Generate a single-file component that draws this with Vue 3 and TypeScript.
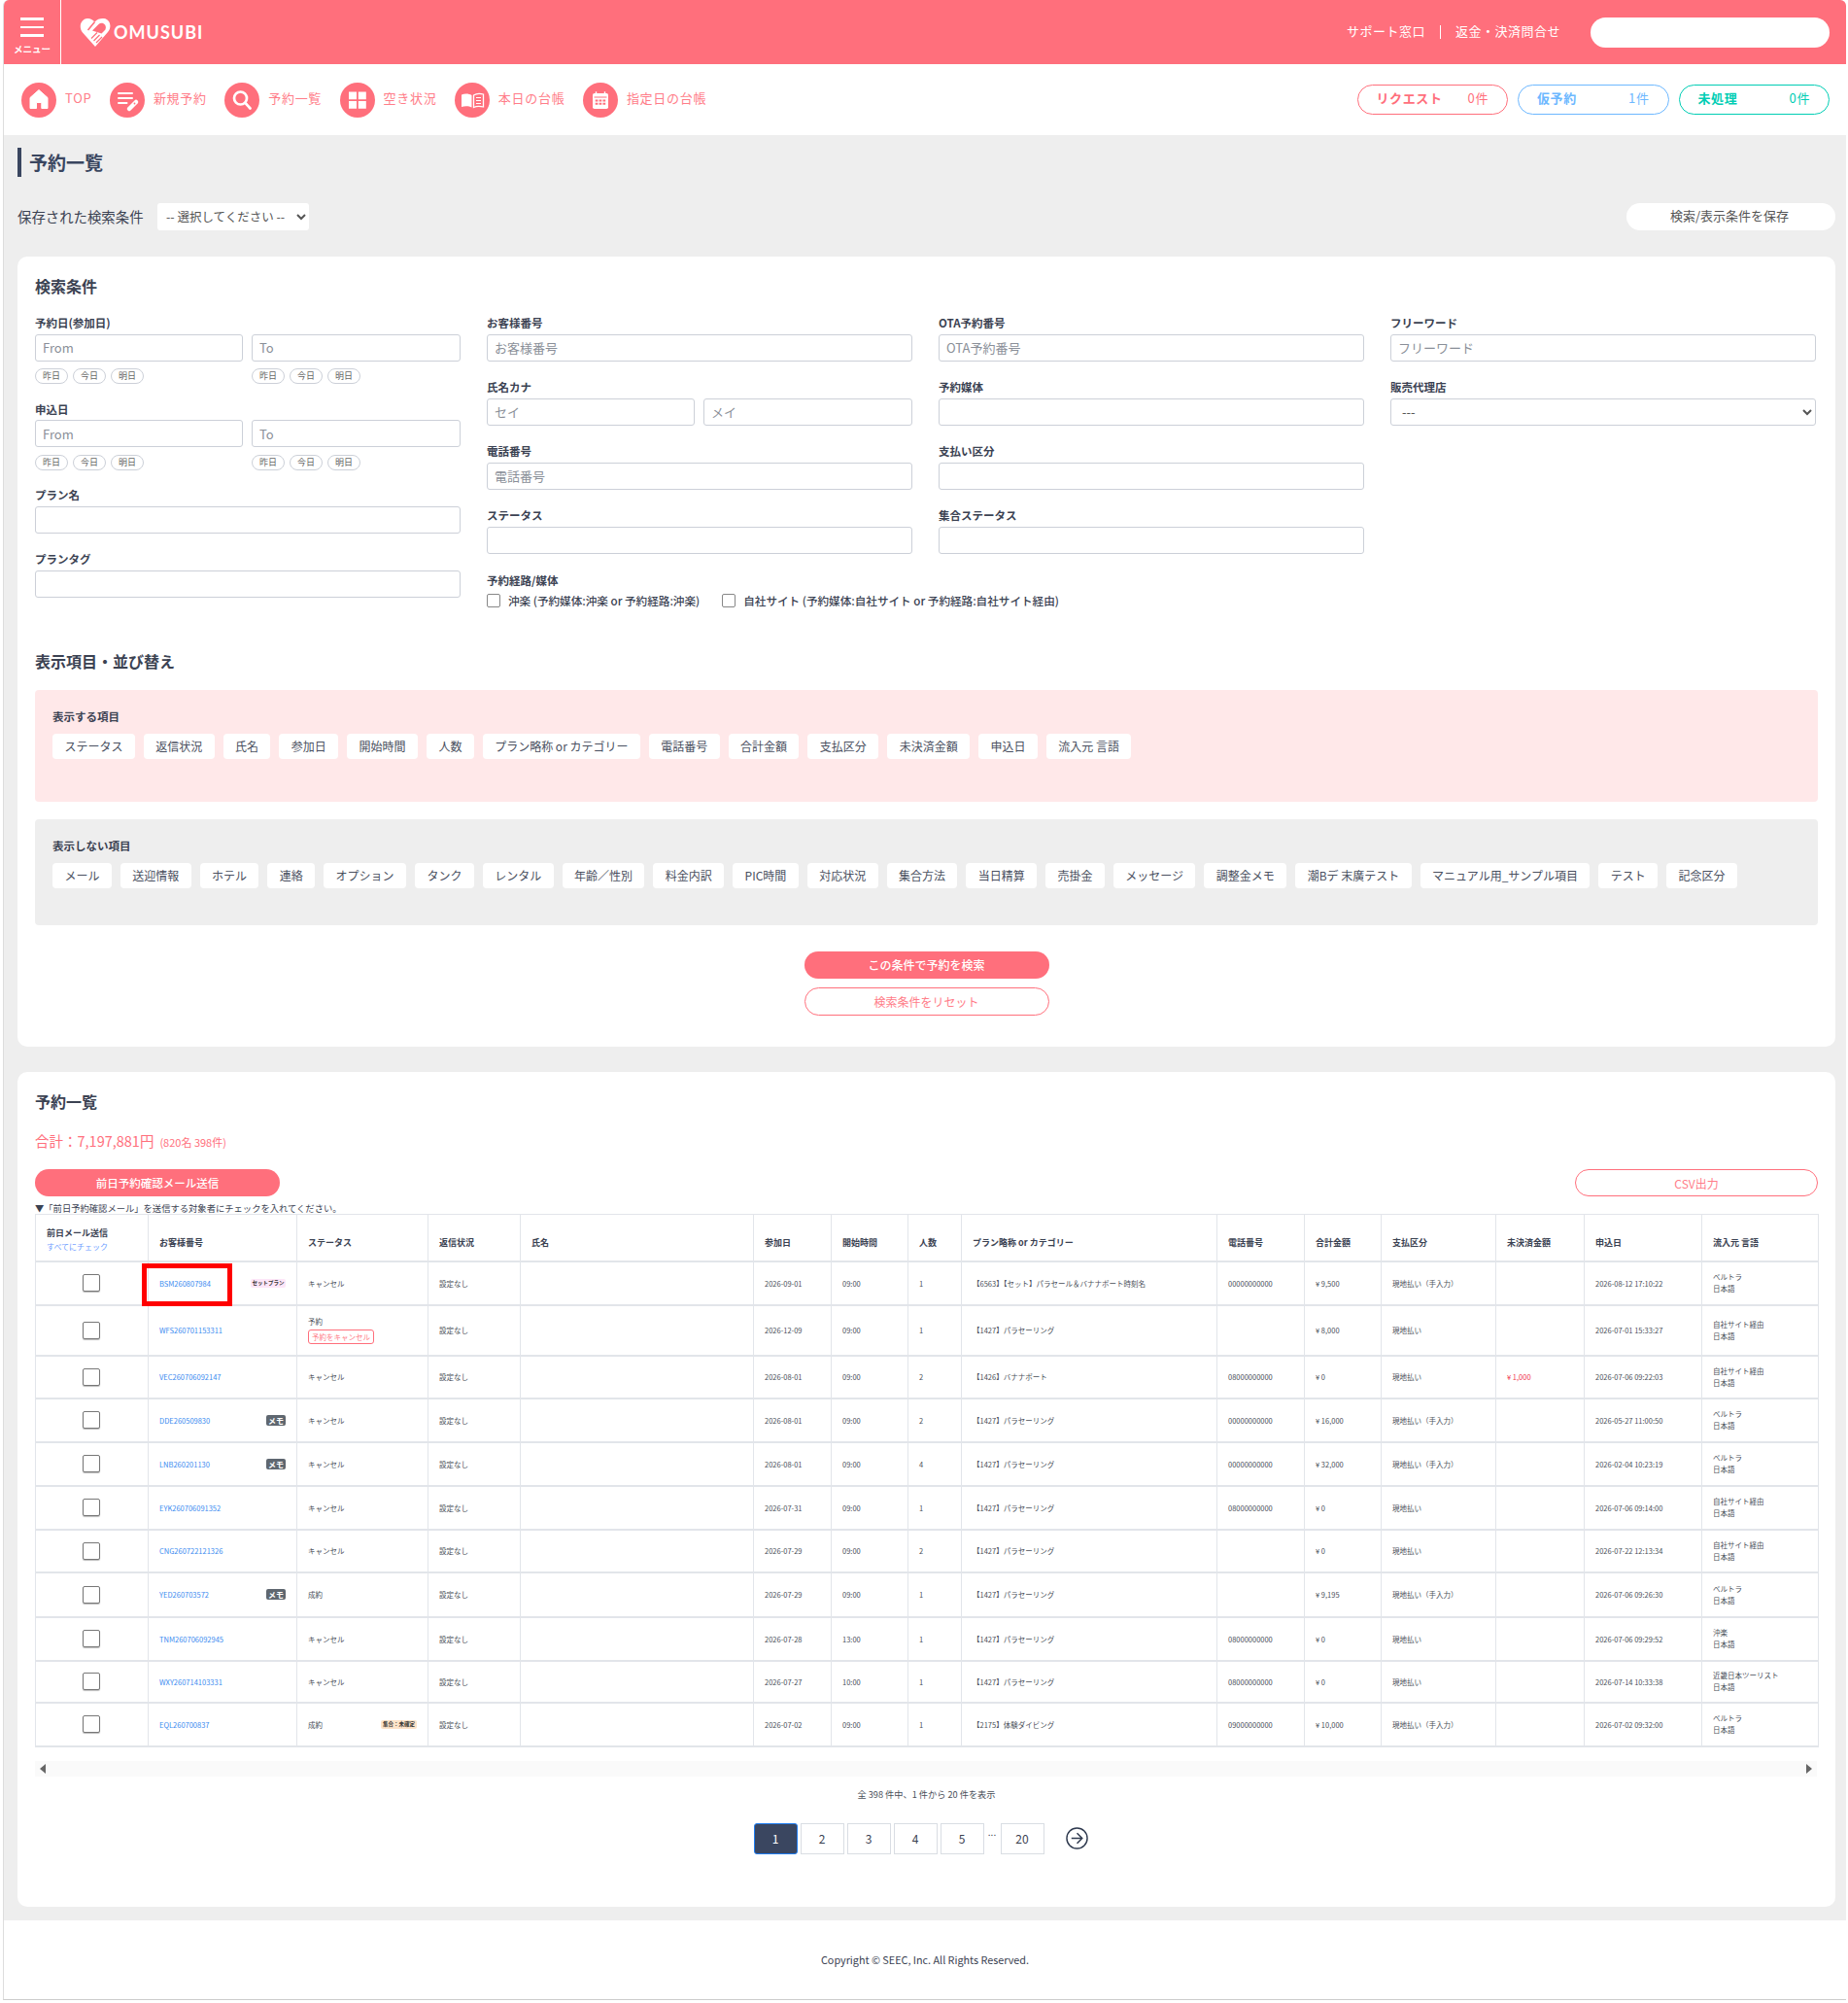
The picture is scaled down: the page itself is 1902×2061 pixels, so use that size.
<script setup lang="ts">
interface Row {
  id: string
  status: string
  date: string
  time: string
  n: number
  plan: string
  tel: string
  total: string
  pay: string
  unpaid: string
  applied: string
  source: string
  h: number
  badge?: 'set' | 'memo'
  gather?: boolean
  cancelBtn?: boolean
  flag?: boolean
}

const TEL0 = '00000000000'
const TEL8 = '08000000000'
const PARA = '【1427】パラセーリング'
const HAND = '現地払い（手入力）'
const GEN = '現地払い'
const CAN = 'キャンセル'
const VEL = 'ベルトラ'
const OWN = '自社サイト経由'

const rows: Row[] = [
  { id: 'BSM260807984', status: CAN, date: '2026-09-01', time: '09:00', n: 1, plan: '【6563】【セット】パラセール＆バナナボート時刻名', tel: TEL0, total: '¥ 9,500', pay: HAND, unpaid: '', applied: '2026-08-12 17:10:22', source: VEL, h: 45, badge: 'set', flag: true },
  { id: 'WFS260701153311', status: '予約', date: '2026-12-09', time: '09:00', n: 1, plan: PARA, tel: '', total: '¥ 8,000', pay: GEN, unpaid: '', applied: '2026-07-01 15:33:27', source: OWN, h: 52, cancelBtn: true },
  { id: 'VEC260706092147', status: CAN, date: '2026-08-01', time: '09:00', n: 2, plan: '【1426】バナナボート', tel: TEL8, total: '¥ 0', pay: GEN, unpaid: '¥ 1,000', applied: '2026-07-06 09:22:03', source: OWN, h: 44 },
  { id: 'DDE260509830', status: CAN, date: '2026-08-01', time: '09:00', n: 2, plan: PARA, tel: TEL0, total: '¥ 16,000', pay: HAND, unpaid: '', applied: '2026-05-27 11:00:50', source: VEL, h: 45, badge: 'memo' },
  { id: 'LNB260201130', status: CAN, date: '2026-08-01', time: '09:00', n: 4, plan: PARA, tel: TEL0, total: '¥ 32,000', pay: HAND, unpaid: '', applied: '2026-02-04 10:23:19', source: VEL, h: 45, badge: 'memo' },
  { id: 'EYK260706091352', status: CAN, date: '2026-07-31', time: '09:00', n: 1, plan: PARA, tel: TEL8, total: '¥ 0', pay: GEN, unpaid: '', applied: '2026-07-06 09:14:00', source: OWN, h: 45 },
  { id: 'CNG260722121326', status: CAN, date: '2026-07-29', time: '09:00', n: 2, plan: PARA, tel: '', total: '¥ 0', pay: GEN, unpaid: '', applied: '2026-07-22 12:13:34', source: OWN, h: 44 },
  { id: 'YED260703572', status: '成約', date: '2026-07-29', time: '09:00', n: 1, plan: PARA, tel: '', total: '¥ 9,195', pay: HAND, unpaid: '', applied: '2026-07-06 09:26:30', source: VEL, h: 46, badge: 'memo' },
  { id: 'TNM260706092945', status: CAN, date: '2026-07-28', time: '13:00', n: 1, plan: PARA, tel: TEL8, total: '¥ 0', pay: GEN, unpaid: '', applied: '2026-07-06 09:29:52', source: '沖楽', h: 45 },
  { id: 'WXY260714103331', status: CAN, date: '2026-07-27', time: '10:00', n: 1, plan: PARA, tel: TEL8, total: '¥ 0', pay: GEN, unpaid: '', applied: '2026-07-14 10:33:38', source: '近畿日本ツーリスト', h: 43 },
  { id: 'EQL260700837', status: '成約', date: '2026-07-02', time: '09:00', n: 1, plan: '【2175】体験ダイビング', tel: '09000000000', total: '¥ 10,000', pay: HAND, unpaid: '', applied: '2026-07-02 09:32:00', source: VEL, h: 45, gather: true },
]

const shown = ['ステータス','返信状況','氏名','参加日','開始時間','人数','プラン略称 or カテゴリー','電話番号','合計金額','支払区分','未決済金額','申込日','流入元 言語']
const hidden = ['メール','送迎情報','ホテル','連絡','オプション','タンク','レンタル','年齢／性別','料金内訳','PIC時間','対応状況','集合方法','当日精算','売掛金','メッセージ','調整金メモ','潮Bデ 末廣テスト','マニュアル用_サンプル項目','テスト','記念区分']
const heads = ['参加日','開始時間','人数','プラン略称 or カテゴリー','電話番号','合計金額','支払区分','未決済金額','申込日','流入元 言語']
const widths = [116,153,135,95,240,80,79,55,263,90,79,118,91,121,120]
const navItems = ['TOP','新規予約','予約一覧','空き状況','本日の台帳','指定日の台帳']
const dayChips = ['昨日','今日','明日']
const pages = ['1','2','3','4','5']
</script>

<template>
  <div class="page">
    <header class="top">
      <div class="menu">
        <span class="bars"><i></i><i></i><i></i></span>
        <span class="menu-label">メニュー</span>
      </div>
      <div class="logo">
        <svg width="32" height="30" viewBox="0 0 32 30">
          <path d="M16 30 L3 15.500 C-1.500 10 1 1.500 8 1 C11 .8 13 2 15.500 4.500 C18 1.500 22 .5 25 1 C31.500 2 33.500 10 29 15 Z" fill="#fff"/>
          <path d="M8.500 13 L15.500 4.500" stroke="#ff6f7c" stroke-width="1.600" fill="none"/>
          <path d="M13 13.500 L19.500 7 C21.500 5 24.500 5.500 26 7.500 C27.500 9.500 27 12 25.500 13.500 L22.500 16.500 Z" fill="#ff6f7c"/>
          <path d="M14.500 24 L20.500 18 M17 26 L23 20 M12 21.500 L18 15.500" stroke="#ff6f7c" stroke-width="1.200" fill="none"/>
        </svg>
        <span class="logo-text">OMUSUBI</span>
      </div>
      <div class="top-right">
        <a class="top-link">サポート窓口</a>
        <span class="sep"></span>
        <a class="top-link">返金・決済問合せ</a>
        <span class="top-search"></span>
      </div>
    </header>

    <nav class="nav">
      <div class="nav-items">
        <a v-for="(item, i) in navItems" :key="item" class="nav-item">
          <span class="nav-icon">
            <svg width="36" height="36" viewBox="0 0 36 36">
              <template v-if="i === 0">
                <path d="M18 7.500 L27 15.500 V26.500 H20.800 V20.500 H15.500 V26.500 H9 V15.500 Z" fill="#fff" stroke="#fff" stroke-width="1" stroke-linejoin="round"/>
              </template>
              <template v-else-if="i === 1">
                <path d="M9 11h14M9 16h14M9 21h8.500" stroke="#fff" stroke-width="2" stroke-linecap="round" fill="none"/>
                <path d="M20 27 L27 20" stroke="#fff" stroke-width="4.500" stroke-linecap="round"/>
                <circle cx="25.500" cy="21.500" r=".9" fill="#ff6f7c"/>
              </template>
              <template v-else-if="i === 2">
                <circle cx="16.500" cy="16" r="6.500" fill="none" stroke="#fff" stroke-width="2.700"/>
                <path d="M21.500 21 L26.500 26.500" stroke="#fff" stroke-width="2.700" stroke-linecap="round"/>
              </template>
              <template v-else-if="i === 3">
                <path d="M9 9.500h8v7.800H9zM18.800 9.500h8v7.800h-8zM9 19h8v7.800H9zM18.800 19h8v7.800h-8z" fill="#fff"/>
              </template>
              <template v-else-if="i === 4">
                <path d="M7 12.500 C10 11 14.500 11 17.500 13 V25.500 C14.500 24 10.500 24 7 25 Z" fill="#fff"/>
                <path d="M19.500 13 C22 11.300 26 11 29.500 12 V25 C26 24 22.500 24 19.500 25.500 Z" fill="none" stroke="#fff" stroke-width="1.300"/>
                <path d="M22 15.500h5M22 18.500h5M22 21.500h5" stroke="#fff" stroke-width="1.100"/>
              </template>
              <template v-else>
                <rect x="10" y="11" width="16" height="16" rx="1.800" fill="#fff"/>
                <path d="M13.500 9.300v3M22.500 9.300v3" stroke="#fff" stroke-width="1.400"/>
                <path d="M11.500 15h13" stroke="#ff6f7c" stroke-width="1"/>
                <path d="M12.700 17.500h2.700v2h-2.700zM16.600 17.500h2.700v2h-2.700zM20.500 17.500h2.700v2h-2.700zM12.700 20.800h2.700v2h-2.700zM16.600 20.800h2.700v2h-2.700zM20.500 20.800h2.700v2h-2.700z" fill="#ff6f7c"/>
              </template>
            </svg>
          </span>
          <span class="nav-label">{{ item }}</span>
        </a>
      </div>
      <div class="counts">
        <a class="count c-red"><b>リクエスト</b><span>0件</span></a>
        <a class="count c-blue"><b>仮予約</b><span>1件</span></a>
        <a class="count c-green"><b>未処理</b><span>0件</span></a>
      </div>
    </nav>

    <main class="main">
      <h1 class="page-title">予約一覧</h1>

      <div class="saved">
        <span class="saved-label">保存された検索条件</span>
        <select class="saved-select"><option>-- 選択してください --</option></select>
        <button class="save-btn">検索/表示条件を保存</button>
      </div>

      <section class="card search-card">
        <h2 class="card-title">検索条件</h2>
        <div class="form-grid">
          <div class="col">
            <div class="field f1">
              <label>予約日(参加日)</label>
              <div class="pair"><input placeholder="From" /><input placeholder="To" /></div>
              <div class="pair chips-pair">
                <div class="day-chips"><span v-for="c in dayChips" :key="c">{{ c }}</span></div>
                <div class="day-chips"><span v-for="c in dayChips" :key="c">{{ c }}</span></div>
              </div>
            </div>
            <div class="field f1">
              <label>申込日</label>
              <div class="pair"><input placeholder="From" /><input placeholder="To" /></div>
              <div class="pair chips-pair">
                <div class="day-chips"><span v-for="c in dayChips" :key="c">{{ c }}</span></div>
                <div class="day-chips"><span v-for="c in dayChips" :key="c">{{ c }}</span></div>
              </div>
            </div>
            <div class="field"><label>プラン名</label><input /></div>
            <div class="field"><label>プランタグ</label><input /></div>
          </div>
          <div class="col">
            <div class="field"><label>お客様番号</label><input placeholder="お客様番号" /></div>
            <div class="field"><label>氏名カナ</label><div class="pair"><input placeholder="セイ" /><input placeholder="メイ" /></div></div>
            <div class="field"><label>電話番号</label><input placeholder="電話番号" /></div>
            <div class="field"><label>ステータス</label><input /></div>
            <div class="field route">
              <label>予約経路/媒体</label>
              <div class="checks">
                <span class="check"><i class="box"></i>沖楽 (予約媒体:沖楽 or 予約経路:沖楽)</span>
                <span class="check"><i class="box"></i>自社サイト (予約媒体:自社サイト or 予約経路:自社サイト経由)</span>
              </div>
            </div>
          </div>
          <div class="col">
            <div class="field"><label>OTA予約番号</label><input placeholder="OTA予約番号" /></div>
            <div class="field"><label>予約媒体</label><input /></div>
            <div class="field"><label>支払い区分</label><input /></div>
            <div class="field"><label>集合ステータス</label><input /></div>
          </div>
          <div class="col">
            <div class="field"><label>フリーワード</label><input placeholder="フリーワード" /></div>
            <div class="field"><label>販売代理店</label><select class="agency"><option>---</option></select></div>
          </div>
        </div>

        <h2 class="card-title columns-title">表示項目・並び替え</h2>
        <div class="pick pick-on">
          <div class="pick-label">表示する項目</div>
          <div class="pick-chips"><span v-for="s in shown" :key="s">{{ s }}</span></div>
        </div>
        <div class="pick pick-off">
          <div class="pick-label">表示しない項目</div>
          <div class="pick-chips"><span v-for="s in hidden" :key="s">{{ s }}</span></div>
        </div>

        <div class="actions">
          <button class="btn-solid">この条件で予約を検索</button>
          <button class="btn-line">検索条件をリセット</button>
        </div>
      </section>

      <section class="card list-card">
        <h2 class="card-title">予約一覧</h2>
        <p class="sum">合計：7,197,881円<small>(820名 398件)</small></p>
        <div class="mail-row">
          <button class="btn-solid wide">前日予約確認メール送信</button>
          <button class="btn-line wide csv">CSV出力</button>
        </div>
        <p class="notice">▼「前日予約確認メール」を送信する対象者にチェックを入れてください。</p>

        <table class="table">
          <colgroup><col v-for="(w, i) in widths" :key="i" :style="{ width: w + 'px' }" /></colgroup>
          <thead>
            <tr>
              <th class="th-first">前日メール送信<a class="check-all">すべてにチェック</a></th>
              <th>お客様番号</th>
              <th>ステータス</th>
              <th>返信状況</th>
              <th>氏名</th>
              <th v-for="h in heads" :key="h">{{ h }}</th>
            </tr>
          </thead>
          <tbody>
            <tr v-for="r in rows" :key="r.id" :style="{ height: r.h + 'px' }">
              <td class="c-check"><i class="box big"></i></td>
              <td class="c-id">
                <div class="split">
                  <a>{{ r.id }}</a>
                  <span v-if="r.badge === 'set'" class="b-set">セットプラン</span>
                  <span v-if="r.badge === 'memo'" class="b-memo">メモ</span>
                </div>
                <span v-if="r.flag" class="highlight"></span>
              </td>
              <td>
                <div class="split">
                  <span>{{ r.status }}</span>
                  <span v-if="r.gather" class="b-gather">集合：未確定</span>
                </div>
                <a v-if="r.cancelBtn" class="cancel">予約をキャンセル</a>
              </td>
              <td>設定なし</td>
              <td></td>
              <td>{{ r.date }}</td>
              <td>{{ r.time }}</td>
              <td>{{ r.n }}</td>
              <td>{{ r.plan }}</td>
              <td>{{ r.tel }}</td>
              <td>{{ r.total }}</td>
              <td>{{ r.pay }}</td>
              <td class="red">{{ r.unpaid }}</td>
              <td>{{ r.applied }}</td>
              <td class="src">{{ r.source }}<br />日本語</td>
            </tr>
          </tbody>
        </table>

        <div class="scrollbar"><i class="arrow-l"></i><i class="arrow-r"></i></div>
        <p class="result">全 398 件中、1 件から 20 件を表示</p>
        <div class="pager">
          <span v-for="(p, i) in pages" :key="p" class="pg" :class="{ on: i === 0 }">{{ p }}</span>
          <span class="dots">...</span>
          <span class="pg">20</span>
          <svg class="next" width="23" height="23" viewBox="0 0 24 24"><circle cx="12" cy="12" r="11" fill="none" stroke="#2f3a4f" stroke-width="1.500"/><path d="M6 12h11M12 6.500 17.500 12 12 17.500" fill="none" stroke="#2f3a4f" stroke-width="1.500"/></svg>
        </div>
      </section>
    </main>

    <footer class="foot">Copyright © SEEC, Inc. All Rights Reserved.</footer>
  </div>
</template>

<style>
html, body { background: #fff; }
</style>

<style scoped>
.page {
  width: 1896px;
  height: 2057px;
  margin-left: 3px;
  background: #eee;
  border-left: 1px solid #ddd;
  border-bottom: 1px solid #ccc;
  border-radius: 6px 6px 0 0;
  overflow: hidden;
  font-family: "Noto Sans CJK JP", "Noto Sans", sans-serif;
  color: #3b4252;
  display: flex;
  flex-direction: column;
  box-sizing: content-box;
}
.top {
  height: 66px;
  background: #ff6f7c;
  color: #fff;
  display: flex;
  align-items: center;
  flex: none;
}
.menu {
  width: 58px;
  height: 48px;
  border-right: 1px solid #fff;
  display: flex;
  flex-direction: column;
  align-items: center;
  padding-top: 18px;
  box-sizing: content-box;
}
.bars { display: flex; flex-direction: column; gap: 6px; }
.bars i { display: block; width: 24px; height: 2.500px; background: #fff; }
.menu-label { font-size: 9.500px; font-weight: 700; line-height: 12px; margin-top: 6px; white-space: nowrap; }
.logo { display: flex; align-items: center; margin-left: 19px; gap: 3px; }
.logo-text { font-family: "Lato", sans-serif; font-weight: 700; font-size: 18px; letter-spacing: 1px; margin-bottom: 1px; }
.top-right { margin-left: auto; display: flex; align-items: center; padding-right: 17px; }
.top-link { font-size: 13px; letter-spacing: .5px; margin-bottom: 4px; }
.sep { width: 1px; height: 14px; background: #fff; margin: 0 15px; }
.top-search { width: 246px; height: 31px; background: #fff; border-radius: 16px; margin-left: 31px; }

.nav {
  height: 73px;
  background: #fff;
  display: flex;
  align-items: center;
  justify-content: space-between;
  padding: 0 17px 0 18px;
  flex: none;
}
.nav-items { display: flex; align-items: center; }
.nav-item { display: flex; align-items: center; margin-right: 18.500px; }
.nav-icon {
  width: 36px;
  height: 36px;
  border-radius: 50%;
  background: #ff6f7c;
  display: block;
  margin-right: 9px;
  flex: none;
}
.nav-icon svg { display: block; }
.nav-label { font-size: 13px; color: #ff7d89; letter-spacing: .7px; white-space: nowrap; margin-bottom: 5px; }
.counts { display: flex; gap: 10px; }
.count {
  width: 155.500px;
  height: 31px;
  box-sizing: border-box;
  border: 1px solid currentColor;
  border-radius: 16px;
  display: flex;
  align-items: center;
  justify-content: space-between;
  padding: 0 19px;
  font-size: 13px;
  letter-spacing: .6px;
}
.count b { font-weight: 700; margin-bottom: 4px; }
.count span { margin-bottom: 4px; }
.c-red { color: #ff6f7c; }
.c-blue { color: #6db8ff; }
.c-green { color: #00cdb4; }

.main { flex: 1; padding: 13px 11px 14px 14px; display: flex; flex-direction: column; }
.page-title {
  margin: 0;
  height: 30px;
  line-height: 30px;
  border-left: 4px solid #3a4660;
  padding-left: 8px;
  font-size: 19px;
  font-weight: 700;
  color: #3a4660;
}
.saved { display: flex; align-items: center; margin-top: 27px; height: 28px; }
.saved-label { font-size: 14.400px; color: #3b4252; width: 144px; margin-bottom: 2px; }
.saved-select {
  width: 156px;
  height: 28px;
  border: 0;
  border-radius: 3px;
  background: #fff;
  font: inherit;
  font-size: 12.500px;
  color: #555;
  padding: 0 5px 2px;
}
.save-btn {
  margin-left: auto;
  width: 215px;
  height: 28px;
  border: 0;
  border-radius: 14px;
  background: #fff;
  font: inherit;
  font-size: 13px;
  color: #555;
  padding: 0 3px 3px 0;
}
.card { background: #fff; border-radius: 10px; }
.search-card { margin-top: 27px; height: 813px; padding: 17px 18px 0; box-sizing: border-box; }
.card-title { margin: 0; font-size: 16px; line-height: 26px; font-weight: 700; color: #3b4252; }
.form-grid {
  display: grid;
  grid-template-columns: repeat(4, 438px);
  column-gap: 27px;
  margin-top: 17px;
  height: 342.500px;
}
.col { display: flex; flex-direction: column; }
.field { display: flex; flex-direction: column; margin-bottom: 18.500px; }
.field.f1 { margin-bottom: 17.500px; }
.field label { font-size: 11.500px; font-weight: 700; line-height: 17px; height: 17px; color: #3b4252; margin-bottom: 2.500px; }
.field input, .agency {
  width: 100%;
  height: 28px;
  box-sizing: border-box;
  border: 1px solid #ccd0d8;
  border-radius: 3px;
  background: #fff;
  padding: 0 7px;
  font: inherit;
  font-size: 13px;
  color: #555;
  outline: 0;
  display: block;
}
.field input::placeholder { color: #8a8f98; }
.pair { display: grid; grid-template-columns: 214px 215px; column-gap: 9px; }
.chips-pair { margin-top: 7.500px; }
.day-chips { display: flex; gap: 5px; }
.day-chips span {
  width: 34px;
  height: 16px;
  box-sizing: border-box;
  border: 1px solid #ccd0d8;
  border-radius: 8px;
  font-size: 9px;
  line-height: 14px;
  text-align: center;
  color: #666;
}
.route { margin-top: 1px; }
.route label { margin-bottom: 0; }
.checks { display: flex; gap: 23px; margin-top: 2px; white-space: nowrap; }
.check { display: flex; align-items: center; font-size: 11.600px; font-weight: 500; gap: 8px; color: #3b4252; height: 19px; }
.box {
  display: block;
  width: 14px;
  height: 14px;
  box-sizing: border-box;
  border: 1px solid #888;
  border-radius: 2px;
  background: #fff;
  flex: none;
}
.box.big { width: 18px; height: 18px; margin: 0 auto; border-color: #777; border-radius: 2px; box-shadow: 0 1px 1px #bbb; }
.columns-title { margin-top: 0; }
.pick { border-radius: 4px; margin-top: 17px; padding: 18px 18px 0; box-sizing: border-box; }
.pick-on { background: #ffe8e9; height: 115px; }
.pick-off { background: #eee; height: 109px; margin-top: 18px; }
.pick-label { font-size: 11.500px; font-weight: 700; line-height: 18px; color: #3b4252; }
.pick-chips { display: flex; gap: 9px; margin-top: 9px; flex-wrap: nowrap; }
.pick-chips span {
  height: 26px;
  line-height: 25px;
  padding: 0 12.400px;
  background: #fff;
  border-radius: 4px;
  font-size: 12px;
  color: #4a5060;
  white-space: nowrap;
}
.actions { display: flex; flex-direction: column; align-items: center; margin-top: 27px; gap: 9px; }
.btn-solid, .btn-line {
  width: 252px;
  height: 28px;
  border-radius: 14px;
  font: inherit;
  font-size: 12px;
  padding: 0;
}
.btn-solid { background: #ff6f7c; color: #fff; border: 0; font-weight: 500; }
.btn-line { background: #fff; color: #ff7d89; border: 1px solid #ff6f7c; height: 29px; border-radius: 15px; }

.list-card { margin-top: 26px; height: 859px; padding: 17px 18px 0; box-sizing: border-box; position: relative; }
.sum { margin: 16px 0 0; font-size: 14.500px; line-height: 24px; color: #ff6f7c; }
.sum small { font-size: 11px; margin-left: 6px; }
.mail-row { display: flex; justify-content: space-between; margin-top: 16px; }
.btn-solid.wide { font-size: 11.500px; }
.wide { width: 252px; }
.csv { width: 250px; height: 28px; }
.notice { margin: 5px 0 0; font-size: 9.300px; line-height: 14px; color: #3b4252; height: 13px; white-space: nowrap; }
.table { border-collapse: collapse; table-layout: fixed; width: 1834px; }
.table th, .table td { border: 1px solid #e2e5ea; padding: 0 11px; text-align: left; font-size: 7.500px; color: #4a4f59; white-space: nowrap; position: relative; }
.table th { height: 48px; box-sizing: border-box; padding-top: 10px; font-size: 9px; font-weight: 700; color: #3b4252; }
.table th.th-first { padding-top: 5px; }
.table tr { border-bottom: 2px solid #e2e5ea; }
.check-all { display: block; font-size: 8px; font-weight: 400; color: #6d9cff; line-height: 12px; margin-top: 2px; }
.c-check { padding-right: 12px !important; padding-left: 11px !important; }
.c-id a { color: #3b8bf0; font-size: 7.500px; }
.split { display: flex; align-items: center; justify-content: space-between; }
.b-set { background: #fde6f8; color: #333; font-size: 5.500px; font-weight: 700; border-radius: 2px; padding: 0 1.500px; line-height: 9px; }
.b-memo { background: #5f6770; color: #fff; font-size: 8px; font-weight: 700; border-radius: 2px; width: 20px; text-align: center; line-height: 11px; }
.b-gather { background: #fde3c8; color: #333; font-size: 5.500px; font-weight: 700; border-radius: 2px; padding: 0 2px; line-height: 9px; }
.highlight {
  position: absolute;
  left: -7px;
  top: 1px;
  width: 93px;
  height: 44px;
  box-sizing: border-box;
  border: 5px solid #f00;
}
.cancel {
  display: inline-block;
  border: 1px solid #ff6f7c;
  color: #ff7d89;
  border-radius: 3px;
  font-size: 7.500px;
  line-height: 13px;
  padding: 0 3px;
  margin-top: 3px;
}
.red { color: #f0334d !important; }
.src { line-height: 12px; }
.scrollbar { margin-top: 14px; height: 16px; background: #fafafa; position: relative; width: 1834px; }
.arrow-l, .arrow-r { position: absolute; top: 3px; width: 0; height: 0; border-top: 5px solid transparent; border-bottom: 5px solid transparent; }
.arrow-l { left: 5px; border-right: 6px solid #666; }
.arrow-r { right: 5px; border-left: 6px solid #666; }
.result { margin: 11px 0 0; text-align: center; font-size: 9.200px; line-height: 15px; color: #4a4f59; }
.pager { display: flex; justify-content: center; align-items: center; margin-top: 22px; height: 32px; gap: 3px; padding-right: 12px; }
.pg {
  width: 45px;
  height: 32px;
  box-sizing: border-box;
  border: 1px solid #d9dde3;
  font-size: 12px;
  line-height: 30px;
  text-align: center;
  color: #3b4252;
}
.pg.on { background: #3a4660; color: #fff; border-color: #1e7cf0; border-radius: 3px; }
.dots { width: 11px; font-size: 10px; text-align: center; line-height: 10px; align-self: flex-start; margin-top: 4px; }
.next { margin-left: 19px; }
.foot {
  height: 81px;
  background: #fff;
  text-align: center;
  line-height: 81px;
  font-size: 10.800px;
  color: #3b4252;
  flex: none;
}
</style>
